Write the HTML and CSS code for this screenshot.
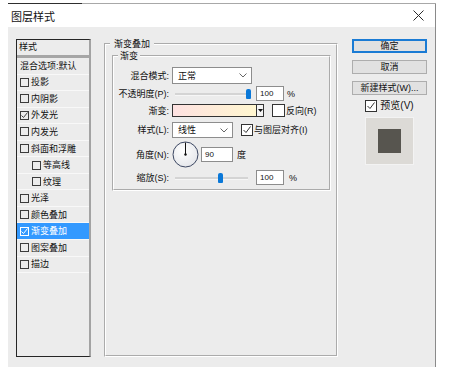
FILE: index.html
```html
<!DOCTYPE html>
<html lang="zh-CN">
<head>
    <meta charset="UTF-8">
    <meta name="viewport" content="width=device-width, initial-scale=1.0">
    <title>图层样式</title>
    <link rel="stylesheet" href="styles.css">
</head>
<body>

<div class="topline"></div>

<div class="dialog">
    <div class="titlebar">
        <span class="title">图层样式</span>
        <svg class="close" width="11" height="11" viewBox="0 0 11 11"><path d="M0.5 0.5L10.5 10.5M10.5 0.5L0.5 10.5" stroke="#2b2b2b" stroke-width="1"/></svg>
    </div>

    <div class="client">
        <!-- daftar efek -->
        <div class="stylelist">
            <div class="list-head">样式</div>
            <div class="list-sep"></div>
            <div class="item">混合选项:默认</div>
            <div class="item"><span class="cb"></span>投影</div>
            <div class="item"><span class="cb"></span>内阴影</div>
            <div class="item"><span class="cb"><svg width="7" height="7" viewBox="0 0 7 7"><path d="M0.5 3.5L2.5 5.5L6.5 0.5" fill="none" stroke="#444" stroke-width="1"/></svg></span>外发光</div>
            <div class="item"><span class="cb"></span>内发光</div>
            <div class="item"><span class="cb"></span>斜面和浮雕</div>
            <div class="item sub"><span class="cb"></span>等高线</div>
            <div class="item sub"><span class="cb"></span>纹理</div>
            <div class="item"><span class="cb"></span>光泽</div>
            <div class="item"><span class="cb"></span>颜色叠加</div>
            <div class="item selected"><span class="cb"><svg width="7" height="7" viewBox="0 0 7 7"><path d="M0.5 3.5L2.5 5.5L6.5 0.5" fill="none" stroke="#fff" stroke-width="1"/></svg></span>渐变叠加</div>
            <div class="item"><span class="cb"></span>图案叠加</div>
            <div class="item"><span class="cb"></span>描边</div>
        </div>

        <fieldset class="group outer">
            <legend>渐变叠加</legend>
            <fieldset class="group inner">
                <legend>渐变</legend>
                <div class="form">
                    <label>混合模式:</label>
                    <div class="ctrl">
                        <div class="select wide">正常<svg class="chev" width="8" height="5" viewBox="0 0 8 5"><polyline points="0.5,0.5 4,4 7.5,0.5" fill="none" stroke="#666"/></svg></div>
                    </div>

                    <label>不透明度(P):</label>
                    <div class="ctrl">
                        <div class="slider"><div class="track"></div><div class="thumb" style="left: 74px"></div></div>
                        <div class="num">100</div>
                        <span class="unit">%</span>
                    </div>

                    <label>渐变:</label>
                    <div class="ctrl">
                        <div class="gradient"></div>
                        <div class="drop"><svg width="5" height="3" viewBox="0 0 5 3"><polygon points="0,0 5,0 2.5,3" fill="#111"/></svg></div>
                        <span class="check big"></span>
                        <span class="cap">反向(R)</span>
                    </div>

                    <label>样式(L):</label>
                    <div class="ctrl">
                        <div class="select narrow">线性<svg class="chev" width="8" height="5" viewBox="0 0 8 5"><polyline points="0.5,0.5 4,4 7.5,0.5" fill="none" stroke="#666"/></svg></div>
                        <span class="check big align"><svg width="10" height="10" viewBox="0 0 10 10"><path d="M1.5 5L4 7.5L8.5 1.5" fill="none" stroke="#333" stroke-width="1"/></svg></span>
                        <span class="cap">与图层对齐(I)</span>
                    </div>

                    <label>角度(N):</label>
                    <div class="ctrl">
                        <svg class="dial" width="27" height="27" viewBox="0 0 27 27">
                            <defs><radialGradient id="dialfill" cx="0.4" cy="0.35" r="0.7"><stop offset="0" stop-color="#ffffff"/><stop offset="1" stop-color="#e4e6ea"/></radialGradient></defs>
                            <circle cx="13.5" cy="13.5" r="12.5" fill="url(#dialfill)" stroke="#3b4661" stroke-width="1"/>
                            <line x1="13.5" y1="13.5" x2="13.5" y2="1.5" stroke="#111" stroke-width="1"/>
                            <circle cx="13.5" cy="13.5" r="1.2" fill="#111"/>
                        </svg>
                        <div class="num angle">90</div>
                        <span class="unit deg">度</span>
                    </div>

                    <label>缩放(S):</label>
                    <div class="ctrl">
                        <div class="slider"><div class="track"></div><div class="thumb" style="left: 46px"></div></div>
                        <div class="num">100</div>
                        <span class="unit pct">%</span>
                    </div>
                </div>
            </fieldset>
        </fieldset>

        <div class="buttons">
            <div class="btn default">确定</div>
            <div class="btn">取消</div>
            <div class="btn">新建样式(W)...</div>
            <div class="preview-check">
                <span class="check big"><svg width="10" height="10" viewBox="0 0 10 10"><path d="M1.5 5L4 7.5L8.5 1.5" fill="none" stroke="#333" stroke-width="1"/></svg></span>
                <span class="cap">预览(V)</span>
            </div>
            <div class="preview"><div class="swatch"></div></div>
        </div>
    </div>
</div>

</body>
</html>
```

FILE: styles.css
```css
html, body {
    margin: 0;
    height: 367px;
    overflow: hidden;
    background-color: #ffffff;
}
body {
    font-family: "Liberation Sans", "Noto Sans CJK SC", sans-serif;
    font-size: 9px;
    line-height: 12px;
    color: #111111;
}
.topline {
    margin: 3px 0 0 8px;
    width: 428px;
    height: 1px;
    background: linear-gradient(to right, #2e2e2e 0 74px, #a8a8a8 74px);
}
.dialog {
    width: 436px;
    height: 363px;
    box-sizing: border-box;
    border-right: 1px solid #8a8a8a;
    display: flex;
    flex-direction: column;
}
.titlebar {
    height: 23px;
    display: flex;
    align-items: center;
    justify-content: space-between;
    padding: 0 11px 0 11px;
}
.title {
    font-size: 11px;
    line-height: 14px;
    margin-top: 2px;
}
.client {
    flex: 1;
    margin-left: 8px;
    background-color: #ececec; /* abu-abu jendela */
    display: flex;
    align-items: flex-start;
    padding: 12px 0 0 8px;
}

/* daftar gaya */
.stylelist {
    width: 75px;
    height: 318px;
    box-sizing: border-box;
    border: 1px solid #262626;
    border-right: 2px solid #a3a3a3;
    display: flex;
    flex-direction: column;
}
.list-head {
    height: 15px;
    line-height: 15px;
    padding-left: 2px;
}
.list-sep {
    height: 3px;
    background-color: #a6a6a6;
}
.item {
    height: 16.55px;
    box-sizing: border-box;
    border-bottom: 1px solid #f8f8f8;
    display: flex;
    align-items: center;
    padding-left: 3px;
}
.item:first-of-type {
    padding-left: 2px;
}
.item.sub {
    padding-left: 15px;
}
.item.selected {
    background-color: #3399ff; /* biru pilihan */
    color: #ffffff;
}
.cb {
    width: 9px;
    height: 9px;
    box-sizing: border-box;
    border: 1px solid #3c3c3c;
    margin-right: 2px;
    display: flex;
    align-items: center;
    justify-content: center;
}
.selected .cb {
    border-color: #ffffff;
}

/* kotak grup */
.group {
    border: 2px groove #ffffff;
    margin: 0;
    min-width: 0;
    box-sizing: border-box;
}
.group legend {
    padding: 0 4px;
    line-height: 12px;
}
.outer {
    width: 234px;
    height: 319px;
    margin: -1px 0 0 13px;
    padding: 0 5px 0 6px;
}
.outer > legend {
    margin-left: -2px;
}
.inner {
    width: 219px;
    height: 141px;
    padding: 4px 0 2px 0;
}
.inner > legend {
    margin-left: 4px;
    padding: 0 2px;
}
.form {
    display: grid;
    grid-template-columns: 55px auto;
    grid-template-rows: 19px 17px 17px 22px 27px 19px;
    column-gap: 3px;
    align-items: center;
}
.form label {
    text-align: right;
    white-space: nowrap;
}
.ctrl {
    display: flex;
    align-items: center;
}
.select {
    height: 17px;
    box-sizing: border-box;
    border: 1px solid #8d8d8d;
    background-color: #ffffff;
    display: flex;
    align-items: center;
    justify-content: space-between;
    padding: 0 4px 0 5px;
}
.select.wide {
    width: 80px;
}
.select.narrow {
    width: 61px;
    height: 16px;
}
.slider {
    position: relative;
    width: 84px;
    height: 12px;
}
.track {
    position: absolute;
    left: 3px;
    right: 8px;
    top: 5px;
    height: 2px;
    background-color: #d4d4d4;
    border-bottom: 1px solid #f6f6f6;
}
.thumb {
    position: absolute;
    top: 1px;
    width: 5px;
    height: 10px;
    background-color: #0a78d8;
    border-radius: 2px 2px 1px 1px;
}
.num {
    width: 28px;
    height: 15px;
    box-sizing: border-box;
    border: 1px solid #8d8d8d;
    background-color: #ffffff;
    font-size: 8px;
    line-height: 13px;
    padding-left: 3px;
}
.num.angle {
    width: 32px;
    margin-left: 2px;
}
.unit {
    margin-left: 3px;
}
.unit.deg {
    margin-left: 4px;
}
.unit.pct {
    margin-left: 5px;
}
.gradient {
    width: 85px;
    height: 13px;
    box-sizing: border-box;
    border: 1px solid #333333;
    background: linear-gradient(to right, #fde1e1, #fff6cf);
}
.drop {
    width: 7px;
    height: 13px;
    box-sizing: border-box;
    border: 1px solid #333333;
    border-left: none;
    background-color: #f4f4f4;
    display: flex;
    align-items: center;
    justify-content: center;
}
.check {
    box-sizing: border-box;
    border: 1px solid #333333;
    background-color: #ffffff;
    display: flex;
    align-items: center;
    justify-content: center;
}
.check.big {
    width: 13px;
    height: 13px;
    margin-left: 8px;
}
.check.align {
    width: 12px;
    height: 12px;
}
.cap {
    margin-left: 1px;
    white-space: nowrap;
}

/* tombol kanan */
.buttons {
    width: 75px;
    margin-left: 14px;
    display: flex;
    flex-direction: column;
    align-items: center;
}
.btn {
    width: 75px;
    height: 14px;
    box-sizing: border-box;
    border: 1px solid #adadad;
    background-color: #e1e1e1;
    text-align: center;
    line-height: 12px;
    margin-bottom: 7px;
}
.btn.default {
    border: 2px solid #1a7bd4;
    line-height: 10px;
}
.preview-check {
    display: flex;
    align-items: center;
    margin-top: -2px;
}
.preview-check .check.big {
    width: 12px;
    height: 12px;
    margin-left: 0;
}
.preview-check .cap {
    margin-left: 3px;
    font-size: 10px;
}
.preview {
    width: 49px;
    height: 48px;
    margin-top: 5px;
    box-sizing: border-box;
    border: 1px solid #f3f3f3;
    background-color: #dcdad6;
    display: flex;
    align-items: center;
    justify-content: center;
}
.swatch {
    width: 23px;
    height: 24px;
    background-color: #57554f;
}
```
